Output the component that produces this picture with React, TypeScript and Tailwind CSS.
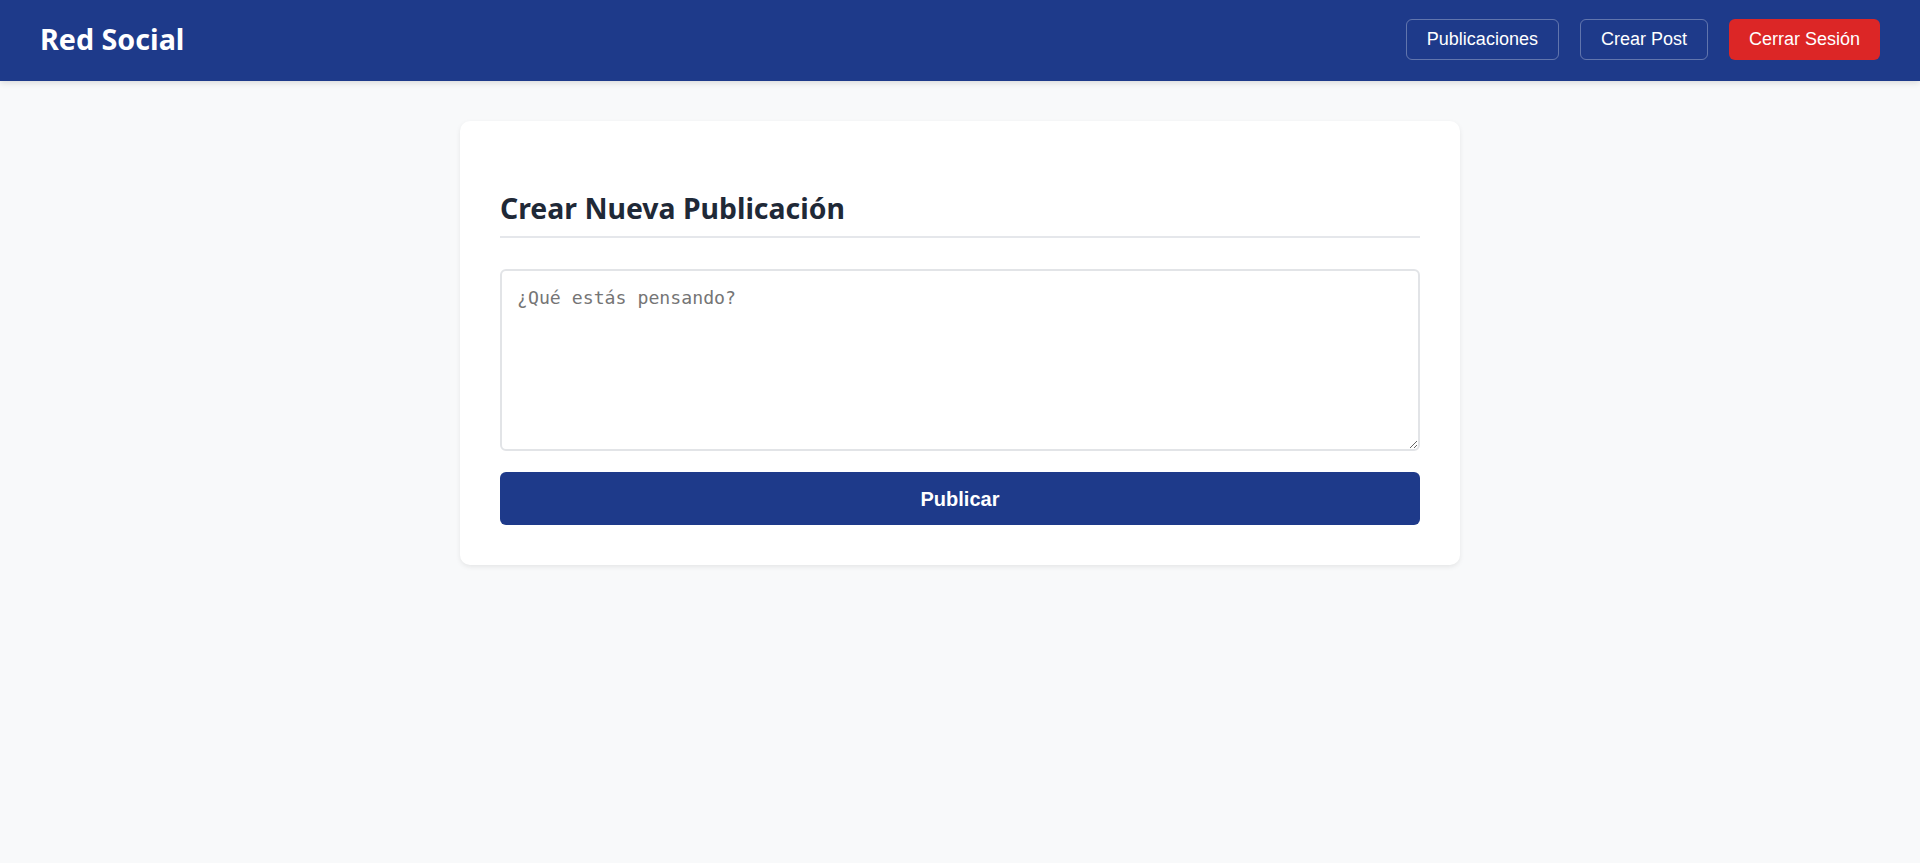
import React from "react";

export default function App() {
  return (
    <div className="min-h-screen bg-[#f8f9fa]" style={{ fontFamily: '"Liberation Sans", Arial, sans-serif' }}>
      <header className="h-[81px] bg-[#1e3a8a] px-10 pb-[2px] flex items-center justify-between shadow-[0_2px_6px_rgba(0,0,0,0.12)]">
        <h1 className="text-white text-[28.7px] leading-[1.2] font-bold [font-family:'Noto_Sans',sans-serif]">Red Social</h1>
        <nav className="flex items-center gap-[21px]">
          <button className="text-white text-[18px] leading-[21px] px-5 py-[9px] border border-white/30 rounded-md">Publicaciones</button>
          <button className="text-white text-[18px] leading-[21px] px-5 py-[9px] border border-white/30 rounded-md">Crear Post</button>
          <button className="text-white text-[18px] leading-[21px] px-5 py-[10px] bg-[#dc2626] rounded-md">Cerrar Sesión</button>
        </nav>
      </header>
      <main className="pt-10">
        <div className="mx-auto w-[1000px] bg-white rounded-[10px] p-10 shadow-[0_2px_5px_rgba(0,0,0,0.08)]">
          <h2 className="mt-[30px] pb-[11px] mb-[31px] border-b-2 border-[#e5e7eb] text-[#1f2937] text-[28.4px] leading-[1.2] font-bold [font-family:'Noto_Sans',sans-serif]">
            Crear Nueva Publicación
          </h2>
          <textarea
            className="block w-full h-[182px] border-2 border-[#e2e4e7] rounded-md pl-[15px] pr-[13px] pt-[13px] pb-[15px] text-[18.2px] text-[#333] placeholder:text-[#757575] outline-none [font-family:'DejaVu_Sans_Mono',monospace]"
            placeholder="¿Qué estás pensando?"
          />
          <button className="mt-[21px] w-full h-[53px] bg-[#1e3a8a] text-white text-[20px] font-bold rounded-[6px]">Publicar</button>
        </div>
      </main>
    </div>
  );
}
